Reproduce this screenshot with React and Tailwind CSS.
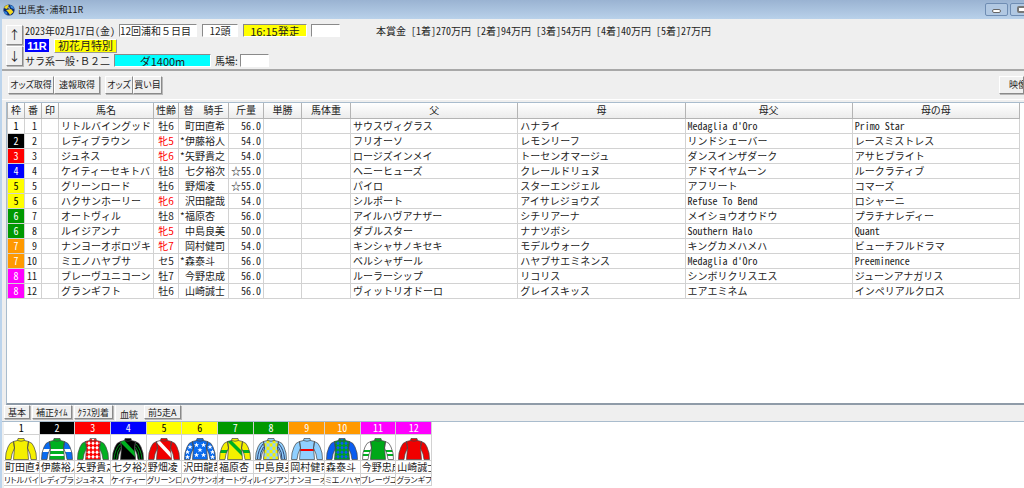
import { useState } from "react";

const PRIZES = [
  "[1着]270万円",
  "[2着]94万円",
  "[3着]54万円",
  "[4着]40万円",
  "[5着]27万円",
];

const TABS = ["基本", "補正ﾀｲﾑ", "ｸﾗｽ別着", "血統", "前5走A"];

// Bracket (waku) colours
const WAKU = {
  1: "bg-white text-black",
  2: "bg-black text-white",
  3: "bg-[#ff0000] text-white",
  4: "bg-[#0000ff] text-white",
  5: "bg-[#ffff00] text-black",
  6: "bg-[#009900] text-white",
  7: "bg-[#ff9900] text-white",
  8: "bg-[#ff00ff] text-white",
};

const HORSES = [
  { waku: 1, name: "リトルバイングッド", sex: "牡6", mark: "", jockey: "町田直希", weight: "56.0", sire: "サウスヴィグラス", dam: "ハナライ", damSire: "Medaglia d'Oro", granddam: "Primo Star" },
  { waku: 2, name: "レディブラウン", sex: "牝5", mark: "*", jockey: "伊藤裕人", weight: "54.0", sire: "フリオーソ", dam: "レモンリーフ", damSire: "リンドシェーバー", granddam: "レースミストレス" },
  { waku: 3, name: "ジュネス", sex: "牝6", mark: "*", jockey: "矢野貴之", weight: "54.0", sire: "ロージズインメイ", dam: "トーセンオマージュ", damSire: "ダンスインザダーク", granddam: "アサヒブライト" },
  { waku: 4, name: "ケイティーセキトバ", sex: "牡8", mark: "", jockey: "七夕裕次", weight: "☆55.0", sire: "ヘニーヒューズ", dam: "クレールドリュヌ", damSire: "アドマイヤムーン", granddam: "ルークラティブ" },
  { waku: 5, name: "グリーンロード", sex: "牡6", mark: "", jockey: "野畑凌", weight: "☆55.0", sire: "パイロ", dam: "スターエンジェル", damSire: "アフリート", granddam: "コマーズ" },
  { waku: 5, name: "ハクサンホーリー", sex: "牝6", mark: "", jockey: "沢田龍哉", weight: "54.0", sire: "シルポート", dam: "アイサレジョウズ", damSire: "Refuse To Bend", granddam: "ロシャーニ" },
  { waku: 6, name: "オートヴィル", sex: "牡8", mark: "*", jockey: "福原杏", weight: "56.0", sire: "アイルハヴアナザー", dam: "シチリアーナ", damSire: "メイショウオウドウ", granddam: "プラチナレディー" },
  { waku: 6, name: "ルイジアンナ", sex: "牝5", mark: "", jockey: "中島良美", weight: "50.0", sire: "ダブルスター", dam: "ナナツボシ", damSire: "Southern Halo", granddam: "Quant" },
  { waku: 7, name: "ナンヨーオボロヅキ", sex: "牝7", mark: "", jockey: "岡村健司", weight: "54.0", sire: "キンシャサノキセキ", dam: "モデルウォーク", damSire: "キングカメハメハ", granddam: "ビューチフルドラマ" },
  { waku: 7, name: "ミエノハヤブサ", sex: "セ5", mark: "*", jockey: "森泰斗", weight: "56.0", sire: "ベルシャザール", dam: "ハヤブサエミネンス", damSire: "Medaglia d'Oro", granddam: "Preeminence" },
  { waku: 8, name: "ブレーヴユニコーン", sex: "牡7", mark: "", jockey: "今野忠成", weight: "56.0", sire: "ルーラーシップ", dam: "リコリス", damSire: "シンボリクリスエス", granddam: "ジューンアナガリス" },
  { waku: 8, name: "グランギフト", sex: "牡6", mark: "", jockey: "山崎誠士", weight: "56.0", sire: "ヴィットリオドーロ", dam: "グレイスキッス", damSire: "エアエミネム", granddam: "インペリアルクロス" },
];

const COLUMNS = [
  { label: "枠", width: "w-[17px]" },
  { label: "番", width: "w-[17px]" },
  { label: "印", width: "w-[17px]" },
  { label: "馬名", width: "w-[95px]" },
  { label: "性齢", width: "w-[25px]" },
  { label: "替\u3000騎手", width: "w-[50px]" },
  { label: "斤量", width: "w-[35px]" },
  { label: "単勝", width: "w-[38px]" },
  { label: "馬体重", width: "w-[49px]" },
  { label: "父", width: "" },
  { label: "母", width: "" },
  { label: "母父", width: "" },
  { label: "母の母", width: "" },
];

const BODY = "M13 1.5H19L19.5 3.5L23.5 4.5L22.5 11L23.5 22.5H8.5L9.5 11L8.5 4.5L12.5 3.5Z";
const LEFT_SLEEVE = "M8.5 4.5L5 6.5L3 10L1 16L.5 22.5H6L7 17L9.5 11Z";
const RIGHT_SLEEVE = "M23.5 4.5L27 6.5L29 10L31 16L31.5 22.5H26L25 17L22.5 11Z";

const STAR = "M0-2.6L.7-.8H2.6L1.1.3L1.7 2.2L0 1.1L-1.7 2.2L-1.1.3L-2.6-.8H-.7Z";

const stars = (points) =>
  points.map(([x, y]) => (
    <path key={`${x}-${y}`} d={STAR} fill="#fff" transform={`translate(${x} ${y})`} />
  ));

const diamonds = (color) =>
  [4, 8.5, 13, 17.5, 22].flatMap((y) =>
    [10, 14, 18, 22].map((x) => (
      <path key={`${x}-${y}`} d={`M${x} ${y - 2.6}l2.2 2.6l-2.2 2.6l-2.2-2.6Z`} fill={color} />
    ))
  );

const checks = (color) =>
  [0, 1, 2, 3, 4, 5].flatMap((row) =>
    [0, 1, 2, 3, 4].map((col) =>
      (row + col) % 2 ? (
        <rect key={`${row}-${col}`} x={8.5 + col * 3} y={3 + row * 3.3} width="3" height="3.3" fill={color} />
      ) : null
    )
  );

// Racing silks, one per horse in running order
const SILKS = [
  { body: "#f5f000", sleeve: "#f5f000" },
  {
    body: "#00b020",
    sleeve: "#0a6cf0",
    pattern: <path d="M6 12h20v2H6zM6 17h20v2H6z" fill="#fff" />,
    cuffs: <path d="M0 12h10l-2 3H0zM22 12h10v3h-8z" fill="#fff" />,
  },
  { body: "#ffffff", sleeve: "#00b020", pattern: diamonds("#ff0000") },
  {
    body: "#000000",
    sleeve: "#000000",
    pattern: <path d="M7 4l4-2l14 15v5z" fill="#00b020" />,
    cuffs: (
      <path d="M2 22Q3 12 8 7M4.500 22Q5 14 8.500 10M30 22Q29 12 24 7M27.500 22Q27 14 23.500 10" fill="none" stroke="#00b020" strokeWidth=".8" />
    ),
  },
  {
    body: "#f00000",
    sleeve: "#f00000",
    pattern: <path d="M7 4l4-1l14 15v5z" fill="#fff" />,
  },
  {
    body: "#0a6cf0",
    sleeve: "#0a6cf0",
    pattern: stars([[12.5, 8], [19.5, 8], [16, 13], [12.5, 18], [19.5, 18]]),
    cuffs: stars([[6, 10], [3.5, 15], [3.5, 20], [26, 10], [28.5, 15], [28.5, 20]]),
  },
  {
    body: "#f5f000",
    sleeve: "#f5f000",
    pattern: <path d="M24 4l-4-1l-13 13v5z" fill="#00b020" transform="matrix(-1 0 0 1 32 0)" />,
    cuffs: <path d="M0 13h9l-1 3H0zM23 13h9v3h-8z" fill="#00b020" />,
  },
  {
    body: "#90d0ff",
    sleeve: "#90d0ff",
    pattern: checks("#f5f000"),
    cuffs: (
      <path d="M2.500 22Q3 13 8 7M5 22Q5 15 8.500 10M29.500 22Q29 13 24 7M27 22Q27 15 23.500 10" fill="none" stroke="#203060" strokeWidth=".9" />
    ),
  },
  {
    body: "#90d0ff",
    sleeve: "#90d0ff",
    pattern: <path d="M6 12h20v2H6z" fill="#f00000" />,
  },
  { body: "#0a5cf0", sleeve: "#0a5cf0", pattern: diamonds("#00a020") },
  {
    body: "#00a818",
    sleeve: "#ffffff",
    cuffs: (
      <path d="M0 13h9l-1 2H0zM0 17h8v2H0zM23 13h9v2h-8zM24 17h8v2h-8z" fill="#00b020" />
    ),
  },
  { body: "#f00000", sleeve: "#f00000" },
];

const Silk = ({ index }) => {
  const { body, sleeve, pattern, cuffs } = SILKS[index];

  return (
    <svg viewBox="0 0 32 23" className="h-[23px] w-8" aria-hidden="true">
      <clipPath id={`body-${index}`}>
        <path d={BODY} />
      </clipPath>
      <clipPath id={`sleeves-${index}`}>
        <path d={LEFT_SLEEVE + RIGHT_SLEEVE} />
      </clipPath>
      <path d={LEFT_SLEEVE + RIGHT_SLEEVE} fill={sleeve} />
      <g clipPath={`url(#sleeves-${index})`}>{cuffs}</g>
      <path d={BODY} fill={body} />
      <g clipPath={`url(#body-${index})`}>{pattern}</g>
      <path d={LEFT_SLEEVE + RIGHT_SLEEVE + BODY} fill="none" stroke="#444" strokeWidth=".7" />
      <path d="M12.500 3.500Q16 5 19.500 3.500" fill="none" stroke="#444" strokeWidth=".7" />
    </svg>
  );
};

const AppIcon = () => (
  <svg viewBox="0 0 12 12" className="size-3" aria-hidden="true">
    <circle cx="6" cy="6" r="5.600" fill="#0d2a6b" />
    <path d="M1 4Q3 0 6 1.500L4 5Z" fill="#f4d822" />
    <path d="M7 1Q11 2 11 5L8 4Z" fill="#3f8fe0" />
    <path d="M3 6L8 5L10.500 8L7 11L5 8Z" fill="#f4d822" />
    <path d="M1 7L4 8L4.500 11Q1 10 1 7Z" fill="#2f7fd8" />
    <path d="M5 3L7 4L6 5Z" fill="#fff" />
  </svg>
);

const RAISED =
  "border border-t-white border-l-white border-r-[#8a8a8a] border-b-[#8a8a8a] bg-[#f0f0f0] shadow-[1px_1px_0_#b8b8b8]";

const Field = ({ label, value = "", className }) => (
  <input
    aria-label={label}
    defaultValue={value}
    className={`h-[13px] border border-t-[#8a8a8a] border-l-[#8a8a8a] border-r-white border-b-white leading-none outline-none ${className}`}
  />
);

const ToolButton = ({ children, className }) => (
  <button type="button" className={`h-[18px] overflow-hidden text-[9px] whitespace-nowrap [font-feature-settings:'palt'] ${RAISED} ${className}`}>
    {children}
  </button>
);

const TitleBar = () => (
  <header className="flex h-[19px] items-center bg-linear-to-b from-[#9ab3d2] to-[#b9d1ea] pl-[3px]">
    <AppIcon />
    <h1 className="ml-[3px] pt-px text-[9px]">出馬表･浦和11R</h1>
    <div className="ml-auto flex w-[39px] gap-[2px] overflow-hidden">
      <button
        type="button"
        aria-label="最小化"
        className="flex h-[13px] w-[23px] shrink-0 items-center justify-center rounded-xs border border-[#6f8db3] bg-[#b1c8e2]"
      >
        <span className="mt-[3px] h-1 w-[9px] rounded-xs border border-[#666] bg-white"></span>
      </button>
      <button
        type="button"
        aria-label="最大化"
        className="flex h-[13px] w-[23px] shrink-0 items-center justify-center rounded-xs border border-[#6f8db3] bg-[#b1c8e2]"
      >
        <span className="h-[7px] w-[9px] rounded-xs border-2 border-[#777] bg-white"></span>
      </button>
    </div>
  </header>
);

const RaceInfo = () => (
  <section className="flex h-[52px] items-start border-b-2 border-[#a8a8a8] pt-1 pl-[4px]">
    <div className="mt-[2px] flex flex-col gap-px">
      <button type="button" aria-label="前のレース" className={`h-5 w-[17px] text-[12px] leading-none ${RAISED}`}>
        ↑
      </button>
      <button type="button" aria-label="次のレース" className={`h-5 w-[17px] text-[12px] leading-none ${RAISED}`}>
        ↓
      </button>
    </div>

    <div className="ml-[2px] flex flex-col">
      <div className="flex h-[15px] items-center">
        <span className="w-[94px] whitespace-nowrap [font-feature-settings:'hwid']">2023年02月17日(金)</span>
        <Field label="開催" value="12回浦和５日目" className="w-[78px] bg-white" />
        <Field label="頭数" value="12頭" className="ml-[5px] w-9 bg-white text-center" />
        <Field label="発走" value="16:15発走" className="ml-[5px] w-16 bg-[#ffff00] text-center text-[11px]" />
        <Field label="備考" className="ml-1 w-[29px] bg-white" />
      </div>
      <div className="flex h-[15px] items-center">
        <span className="flex h-[13px] w-6 items-center justify-center bg-[#0000ff] font-['Liberation_Sans',sans-serif] text-[11px] font-bold text-white">
          11R
        </span>
        <button
          type="button"
          className="ml-[5px] h-[14px] w-[63px] border border-t-white border-l-white border-r-[#999] border-b-[#999] bg-[#ffff00] text-[11px] leading-none"
        >
          初花月特別
        </button>
      </div>
      <div className="flex h-[15px] items-center">
        <span className="w-[89px] whitespace-nowrap">サラ系一般･Ｂ２二</span>
        <Field label="コース" value="ダ1400m" className="w-[97px] bg-[#00ffff] text-center text-[11px]" />
        <label className="ml-1 flex items-center gap-[2px]">
          <span>馬場:</span>
          <Field label="馬場" className="w-[29px] bg-white" />
        </label>
      </div>
    </div>

    <p className="ml-9 flex h-[15px] items-center gap-[5px] whitespace-nowrap [font-feature-settings:'hwid']">
      <span>本賞金</span>
      {PRIZES.map((prize) => (
        <span key={prize}>{prize}</span>
      ))}
    </p>
  </section>
);

const Toolbar = () => (
  <nav className="flex h-[29px] items-center border-b border-white pl-[6px]">
    <ToolButton className="w-[46px]">オッズ取得</ToolButton>
    <ToolButton className="w-[46px]">速報取得</ToolButton>
    <ToolButton className="ml-[5px] w-7">オッズ</ToolButton>
    <ToolButton className="w-[29px]">買い目</ToolButton>
    <ToolButton className="ml-auto w-[25px] pl-[9px] text-left">映像</ToolButton>
  </nav>
);

const EntryTable = () => (
  <div className="ml-1 flex-1 border-t border-b-2 border-l border-[#a9bccd] border-b-[#8f9ba8] bg-white pr-1">
    <table className="w-full table-fixed border-collapse">
      <thead>
        <tr className="h-[15px] bg-linear-to-b from-white to-[#ececec]">
          {COLUMNS.map(({ label, width }) => (
            <th
              key={label}
              scope="col"
              className={`overflow-hidden border border-t-0 border-[#b4b4b4] p-0 text-center leading-[14px] font-normal whitespace-nowrap ${width}`}
            >
              {label}
            </th>
          ))}
        </tr>
      </thead>
      <tbody>
        {HORSES.map((horse, index) => (
          <tr key={horse.name} className="h-[15px] leading-[14px] whitespace-nowrap *:overflow-hidden *:border *:border-[#d2d2d2] *:p-0">
            <td className={`text-center [font-feature-settings:'hwid'] ${WAKU[horse.waku]}`}>{horse.waku}</td>
            <td className="text-right [font-feature-settings:'hwid']">
              <span className="mr-1">{index + 1}</span>
            </td>
            <td></td>
            <td>
              <span className="ml-[2px]">{horse.name}</span>
            </td>
            <td className={`text-center ${horse.sex.startsWith("牝") ? "text-[#ff0000]" : ""}`}>
              {horse.sex}
            </td>
            <td>
              <span className="ml-px inline-block w-[5px]">{horse.mark}</span>
              {horse.jockey}
            </td>
            <td className="text-right [font-feature-settings:'hwid']">
              <span className="mr-[2px]">{horse.weight}</span>
            </td>
            <td></td>
            <td></td>
            <td>
              <span className="ml-[2px]">{horse.sire}</span>
            </td>
            <td>
              <span className="ml-[2px]">{horse.dam}</span>
            </td>
            <td className={/[a-z]/.test(horse.damSire) ? "[font-feature-settings:'hwid']" : ""}>
              <span className="ml-[2px]">{horse.damSire}</span>
            </td>
            <td className={/[a-z]/.test(horse.granddam) ? "[font-feature-settings:'hwid']" : ""}>
              <span className="ml-[2px]">{horse.granddam}</span>
            </td>
          </tr>
        ))}
      </tbody>
    </table>
  </div>
);

const ViewTabs = () => {
  const [active, setActive] = useState("血統");

  return (
    <div role="tablist" className="flex h-[17px] items-start gap-[2px] border-b border-[#a9bccd] pl-[2px]">
      {TABS.map((tab) => (
        <button
          key={tab}
          type="button"
          role="tab"
          aria-selected={tab === active}
          onClick={() => setActive(tab)}
          className={
            tab === active
              ? "h-4 border-l border-white px-1 pt-[3px] text-[9px] leading-3"
              : `h-[14px] px-[3px] text-[9px] leading-none ${RAISED}`
          }
        >
          {tab}
        </button>
      ))}
    </div>
  );
};

const SilksStrip = () => (
  <div className="ml-[2px] h-[66px] bg-white">
    <ul className="grid w-[428px] grid-cols-12">
      {HORSES.map((horse, index) => (
        <li key={horse.name} className="min-w-0 border-r border-[#d2d2d2] text-[10px] whitespace-nowrap *:overflow-hidden *:border-b *:border-[#d2d2d2]">
          <p className={`h-[13px] text-center leading-3 [font-feature-settings:'hwid'] ${WAKU[horse.waku]}`}>{index + 1}</p>
          <div className="flex h-[26px] items-end justify-center">
            <Silk index={index} />
          </div>
          <p className="h-[13px] pl-px leading-3">{horse.jockey}</p>
          <p className="h-3 text-[8px] leading-[11px] [font-feature-settings:'palt']">{horse.name.slice(0, 5)}</p>
        </li>
      ))}
    </ul>
  </div>
);

export default function App() {
  return (
    <div className="flex min-h-screen flex-col overflow-hidden bg-[#efefef] font-['Noto_Sans_CJK_JP','Liberation_Sans',sans-serif] text-[10px] leading-3 text-[#222]">
      <TitleBar />
      <main className="flex flex-1 flex-col border-l-2 border-[#bcd4ec]">
        <RaceInfo />
        <Toolbar />
        <div className="h-[2px]"></div>
        <EntryTable />
        <ViewTabs />
        <SilksStrip />
      </main>
    </div>
  );
}
